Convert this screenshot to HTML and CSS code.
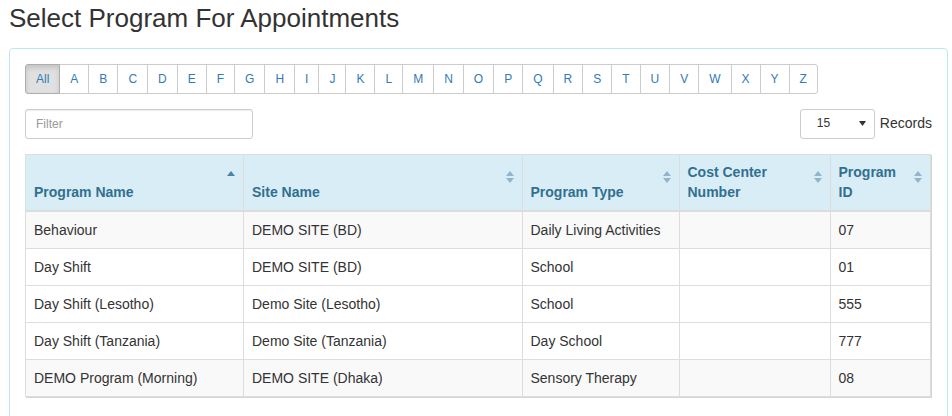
FILE: index.html
```html
<!DOCTYPE html>
<html lang="en">
<head>
<meta charset="utf-8">
<title>Select Program For Appointments</title>
<link rel="stylesheet" href="styles.css">
</head>
<body>
<div class="page">
  <h3 class="title">Select Program For Appointments</h3>
  <div class="panel">
    <div class="alpha">
      <button class="btn active">All</button><button class="btn">A</button><button class="btn">B</button><button class="btn">C</button><button class="btn">D</button><button class="btn">E</button><button class="btn">F</button><button class="btn">G</button><button class="btn">H</button><button class="btn">I</button><button class="btn">J</button><button class="btn">K</button><button class="btn">L</button><button class="btn">M</button><button class="btn">N</button><button class="btn">O</button><button class="btn">P</button><button class="btn">Q</button><button class="btn">R</button><button class="btn">S</button><button class="btn">T</button><button class="btn">U</button><button class="btn">V</button><button class="btn">W</button><button class="btn">X</button><button class="btn">Y</button><button class="btn last">Z</button>
    </div>
    <div class="toolbar">
      <input class="filter" type="text" placeholder="Filter">
      <div class="records">
        <div class="select-box"><span>15</span><svg class="caret" width="7" height="5" viewBox="0 0 7 5"><path d="M0 0H7L3.5 5Z" fill="#333"/></svg></div>
        <span class="records-label">Records</span>
      </div>
    </div>
    <table class="grid">
      <colgroup>
        <col class="c1"><col class="c2"><col class="c3"><col class="c4"><col class="c5">
      </colgroup>
      <thead>
        <tr>
          <th>Program Name<svg class="sort" width="10" height="14" viewBox="0 0 10 14"><path d="M1 6H9L5 1Z" fill="#4a82a8"/></svg></th>
          <th>Site Name<svg class="sort" width="10" height="14" viewBox="0 0 10 14"><path d="M1 6H9L5 1Z M1 8H9L5 13Z" fill="#93b5cb"/></svg></th>
          <th>Program Type<svg class="sort" width="10" height="14" viewBox="0 0 10 14"><path d="M1 6H9L5 1Z M1 8H9L5 13Z" fill="#93b5cb"/></svg></th>
          <th>Cost Center<br>Number<svg class="sort" width="10" height="14" viewBox="0 0 10 14"><path d="M1 6H9L5 1Z M1 8H9L5 13Z" fill="#93b5cb"/></svg></th>
          <th>Program<br>ID<svg class="sort" width="10" height="14" viewBox="0 0 10 14"><path d="M1 6H9L5 1Z M1 8H9L5 13Z" fill="#93b5cb"/></svg></th>
        </tr>
      </thead>
      <tbody>
        <tr class="shade"><td>Behaviour</td><td>DEMO SITE (BD)</td><td>Daily Living Activities</td><td></td><td>07</td></tr>
        <tr><td>Day Shift</td><td>DEMO SITE (BD)</td><td>School</td><td></td><td>01</td></tr>
        <tr><td>Day Shift (Lesotho)</td><td>Demo Site (Lesotho)</td><td>School</td><td></td><td>555</td></tr>
        <tr><td>Day Shift (Tanzania)</td><td>Demo Site (Tanzania)</td><td>Day School</td><td></td><td>777</td></tr>
        <tr class="shade"><td>DEMO Program (Morning)</td><td>DEMO SITE (Dhaka)</td><td>Sensory Therapy</td><td></td><td>08</td></tr>
      </tbody>
    </table>
  </div>
</div>
</body>
</html>
```
FILE: styles.css
```css
* { box-sizing: border-box; }
html, body { margin: 0; padding: 0; background: #fff; }
body {
  font-family: "Liberation Sans", Arial, Helvetica, sans-serif;
  font-size: 14px;
  line-height: 1.42857;
  color: #333;
}
.page { padding: 4px 4px 0 9px; }
.title {
  margin: 0 0 15px 0;
  font-size: 26px;
  font-weight: normal;
  line-height: 1.1;
  color: #333;
}
.panel {
  border: 1px solid #bce8f1;
  border-radius: 4px;
  padding: 15px 15px 30px 15px;
}
.alpha { display: flex; }
.btn {
  font-family: inherit;
  font-size: 12px;
  line-height: 18px;
  padding: 5px 10px;
  height: 30px;
  background: #fff;
  color: #337ab7;
  border: 1px solid #ccc;
  margin: 0 0 0 -1px;
  border-radius: 0;
  cursor: pointer;
}
.btn:first-child { margin-left: 0; border-radius: 3px 0 0 3px; }
.btn.last { border-radius: 0 3px 3px 0; }
.btn.active {
  background: #e0e0e0;
  border-color: #adadad;
  box-shadow: inset 0 3px 5px rgba(0,0,0,.125);
  position: relative;
}
.toolbar {
  display: flex;
  justify-content: space-between;
  align-items: center;
  margin-top: 15px;
}
.filter {
  width: 228px;
  height: 30px;
  padding: 5px 10px;
  font-family: inherit;
  font-size: 12px;
  border: 1px solid #ccc;
  border-radius: 3px;
  color: #555;
  box-shadow: inset 0 1px 1px rgba(0,0,0,.075);
}
.filter::placeholder { color: #999; }
.records { display: flex; align-items: center; gap: 5px; }
.select-box {
  width: 75px;
  height: 30px;
  border: 1px solid #ccc;
  border-radius: 3px;
  display: flex;
  align-items: center;
  justify-content: space-between;
  padding: 0 8px 0 16px;
  font-size: 12px;
  color: #333;
}
.caret { display: block; }
.records-label { font-size: 14px; color: #333; }
.grid {
  margin-top: 15px;
  width: 905px;
  border-collapse: collapse;
  border: 1px solid #ddd;
  box-shadow: 1px 1px 0 #d4d4d4;
  table-layout: fixed;
}
.c1 { width: 218px; }
.c2 { width: 278.5px; }
.c3 { width: 157px; }
.c4 { width: 151px; }
.c5 { width: 100.5px; }
.grid th, .grid td {
  border: 1px solid #ddd;
  padding: 8px;
  text-align: left;
  line-height: 20px;
}
.grid th {
  background: #d9edf7;
  color: #31708f;
  font-weight: bold;
  vertical-align: bottom;
  border-bottom-width: 2px;
  position: relative;
  padding: 7px 24px 8px 8px;
}
.grid td { vertical-align: top; color: #333; }
.grid tr.shade td { background: #f9f9f9; }
.sort {
  position: absolute;
  right: 7px;
  top: 15px;
}
```
